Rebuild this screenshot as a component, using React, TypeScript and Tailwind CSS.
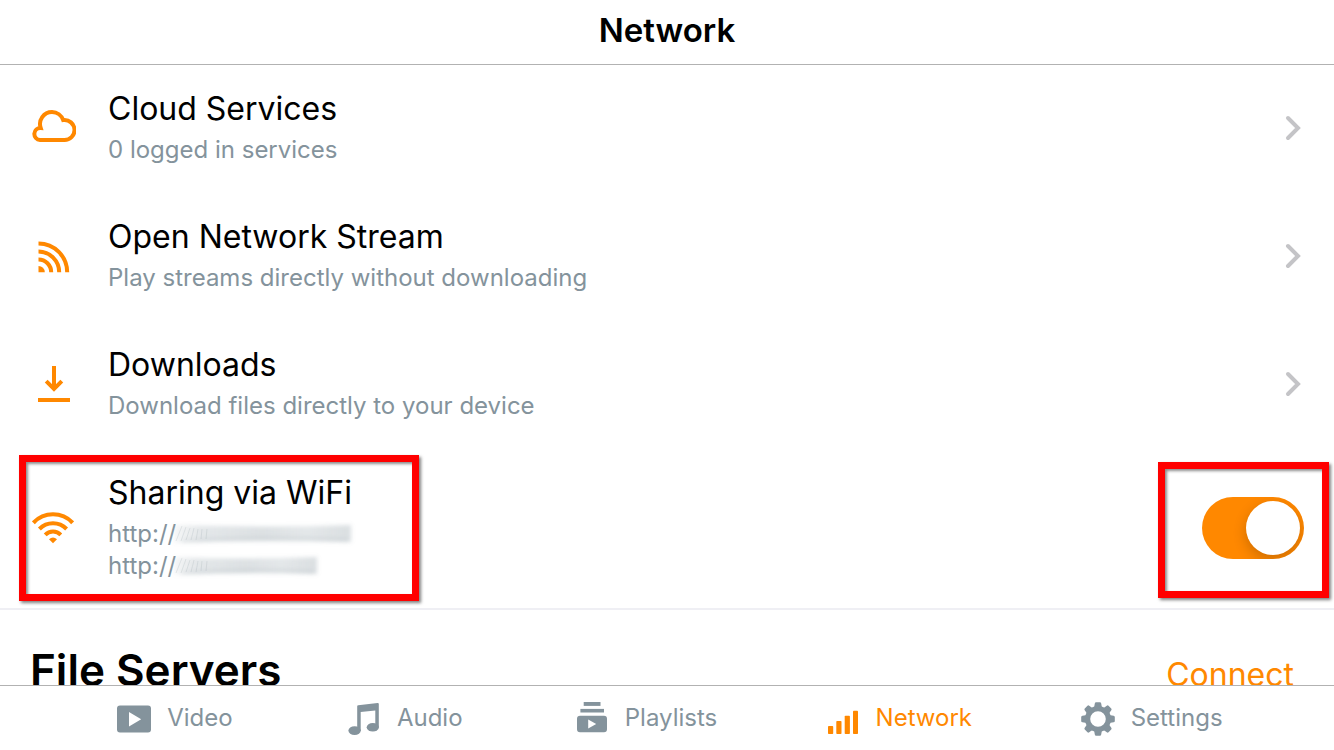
import { useState, type ReactNode } from "react";

function CloudIcon() {
  return (
    <svg width="44" height="34" viewBox="0 0 44 34" fill="none" stroke="currentColor" strokeWidth="4" aria-hidden="true">
      <path d="M8 30H32A10 10 0 1 0 31.2 10.1A12 12 0 0 0 20 2A12 12 0 0 0 8.7 18A6 6 0 0 0 8 30Z" />
    </svg>
  );
}

function StreamIcon() {
  return (
    <svg width="32" height="36" viewBox="0 -4 32 36" fill="none" stroke="currentColor" strokeWidth="4" aria-hidden="true">
      <path d="M.5 2.5A28.7 28.7 0 0 1 29.2 31.2M.5 10.5A20.7 20.7 0 0 1 21.2 31.2M.5 18.5A12.7 12.7 0 0 1 13.2 31.2" />
      <path d="M.5 24.9A6.3 6.3 0 0 1 6.8 31.2H.5Z" fill="currentColor" stroke="none" />
    </svg>
  );
}

function DownloadIcon() {
  return (
    <svg width="32" height="38" viewBox="0 -2 32 38" fill="none" stroke="currentColor" strokeWidth="4" aria-hidden="true">
      <path d="M16 0V23M8.2 15.2L16 23L23.8 15.2M0 34H32" />
    </svg>
  );
}

function WifiIcon() {
  return (
    <svg className="mr-0.5" width="42" height="34" viewBox="0 -2 42 34" fill="none" stroke="currentColor" strokeWidth="4" aria-hidden="true">
      <path d="M1.4 10.8A27 27 0 0 1 40.6 10.8M7.4 17A19 19 0 0 1 34.6 17M13.2 22.8A11 11 0 0 1 28.8 22.8" />
      <path d="M17 27.2Q21 24 25 27.2L21 31.2Z" fill="currentColor" stroke="none" />
    </svg>
  );
}

function VideoIcon() {
  return (
    <svg width="34" height="34" viewBox="0 0 34 34" fill="currentColor" aria-hidden="true">
      <path fillRule="evenodd" d="M3 4.6H31A3 3 0 0 1 34 7.6V28.6A3 3 0 0 1 31 31.6H3A3 3 0 0 1 0 28.6V7.6A3 3 0 0 1 3 4.6ZM12 11V25.4L24.2 18.2Z" />
    </svg>
  );
}

function AudioIcon() {
  return (
    <svg width="32" height="34" viewBox="0 0 32 34" fill="currentColor" aria-hidden="true">
      <path d="M9.2 5.2Q9.2 4.3 10.2 4.2L29.6 2Q30.8 1.9 30.8 3V26H27.3V9.4L12.7 11V30H9.2Z" />
      <ellipse cx="6.6" cy="29.6" rx="6.2" ry="4.4" />
      <ellipse cx="24.8" cy="26.2" rx="6.1" ry="4.3" />
    </svg>
  );
}

function PlaylistsIcon() {
  return (
    <svg width="30" height="34" viewBox="0 0 30 34" fill="currentColor" aria-hidden="true">
      <rect x="6.7" y="1" width="16.8" height="3.9" />
      <rect x="3.4" y="7.9" width="23.6" height="3.6" />
      <path fillRule="evenodd" d="M3 14.8H27A3 3 0 0 1 30 17.8V28.2A3 3 0 0 1 27 31.2H3A3 3 0 0 1 0 28.2V17.8A3 3 0 0 1 3 14.8ZM11.2 18.6V27.6L19.2 23Z" />
    </svg>
  );
}

function NetworkIcon() {
  return (
    <svg width="30" height="34" viewBox="0 0 30 34" fill="currentColor" aria-hidden="true">
      <rect x="0" y="25" width="5.2" height="8" rx="0.8" />
      <rect x="8.3" y="20" width="5.2" height="13" rx="0.8" />
      <rect x="16.7" y="14.8" width="5.2" height="18.2" rx="0.8" />
      <rect x="25" y="9.8" width="5" height="23.2" rx="0.8" />
    </svg>
  );
}

function SettingsIcon() {
  return (
    <svg width="34" height="34" viewBox="-17 -18 34 34" fill="currentColor" overflow="visible" aria-hidden="true">
      <circle r="10.4" fill="none" stroke="currentColor" strokeWidth="5.2" />
      {[0, 45, 90, 135, 180, 225, 270, 315].map((angle) => (
        <path key={angle} transform={`rotate(${angle})`} d="M-4 -11L-3.2 -15.6Q-3 -16.8 -1.9 -16.8H1.9Q3 -16.8 3.2 -15.6L4 -11Z" />
      ))}
    </svg>
  );
}

function Chevron() {
  return (
    <svg className="mr-[3px] text-[#c4c4c7]" width="16" height="28" viewBox="0 -2 16 28" fill="none" stroke="currentColor" strokeWidth="4" strokeLinecap="round" aria-hidden="true">
      <path d="M3 3L13 13L3 23" />
    </svg>
  );
}

function HiddenAddress({ width }: { width: number }) {
  return (
    <svg className="-ml-2" width={width} height="30" viewBox={`0 0 ${width} 30`} fill="none" aria-hidden="true">
      <defs>
        <linearGradient id={`fade-${width}`}>
          <stop offset="0" stopColor="#84939c" stopOpacity="0.08" />
          <stop offset="0.15" stopColor="#84939c" stopOpacity="0.22" />
          <stop offset="0.5" stopColor="#84939c" stopOpacity="0.28" />
          <stop offset="0.75" stopColor="#84939c" stopOpacity="0.22" />
          <stop offset="1" stopColor="#84939c" stopOpacity="0.3" />
        </linearGradient>
        <filter id={`soft-${width}`} x="-5%" y="-30%" width="110%" height="160%">
          <feGaussianBlur stdDeviation="2" />
        </filter>
      </defs>
      <g filter={`url(#soft-${width})`}>
        <path d={`M6 6Q${width / 2} 9 ${width - 5} 6V23Q${width / 2} 21 6 24Z`} fill={`url(#fade-${width})`} />
        <path d={`M14 22Q${width / 2} 17 ${width - 8} 21`} stroke="#84939c" strokeOpacity="0.25" strokeWidth="2" />
      </g>
      <path d="M8 22L14 7M13 22L18 8M18 21L22 9M23 21L26 9M28 21L30 10M33 20L34 10M38 20L39 10" stroke="#84939c" strokeOpacity="0.18" />
    </svg>
  );
}

type RowProps = { icon: ReactNode; title: string; children: ReactNode };

function RowBody({ icon, title, children }: RowProps) {
  return (
    <>
      <span className="flex w-11 shrink-0 justify-center text-[#ff8800]">{icon}</span>
      <span className="flex min-w-0 flex-1 flex-col gap-1">
        <span className="text-[32px] leading-[42px]">{title}</span>
        <span className="text-2xl leading-8 text-[#84939c]">{children}</span>
      </span>
    </>
  );
}

function LinkRow(props: RowProps) {
  return (
    <li>
      <a href="#" className="flex items-center gap-8 pt-[23px] pr-[30px] pb-[27px] pl-8">
        <RowBody {...props} />
        <Chevron />
      </a>
    </li>
  );
}

const tabs = [
  { name: "Video", icon: <VideoIcon /> },
  { name: "Audio", icon: <AudioIcon /> },
  { name: "Playlists", icon: <PlaylistsIcon /> },
  { name: "Network", icon: <NetworkIcon /> },
  { name: "Settings", icon: <SettingsIcon /> },
];

export default function App() {
  const [sharing, setSharing] = useState(true);
  const frame =
    "pointer-events-none absolute border-[7px] border-[#ff0000] shadow-[2px_2px_3px_rgba(0,0,0,0.5),inset_2px_2px_3px_rgba(0,0,0,0.45)]";

  return (
    <div className="flex h-screen flex-col bg-white font-['Inter',sans-serif] text-black">
      <header className="border-b border-[#b2b2b2] pt-2.5 pb-3.5 text-center">
        <h1 className="text-[33px] leading-10 font-semibold">Network</h1>
      </header>

      <main className="min-h-0 flex-1 overflow-hidden">
        <ul>
          <LinkRow icon={<CloudIcon />} title="Cloud Services">0 logged in services</LinkRow>
          <LinkRow icon={<StreamIcon />} title="Open Network Stream">Play streams directly without downloading</LinkRow>
          <LinkRow icon={<DownloadIcon />} title="Downloads">Download files directly to your device</LinkRow>
          <li className="relative border-b-2 border-[#efeff4]">
            <label className="flex items-center gap-8 pt-[23px] pr-[30px] pb-[26px] pl-8">
              <RowBody icon={<WifiIcon />} title="Sharing via WiFi">
                <span className="flex h-8 items-center">http://<HiddenAddress width={188} /></span>
                <span className="flex h-8 items-center">http://<HiddenAddress width={154} /></span>
              </RowBody>
              <input
                type="checkbox"
                role="switch"
                checked={sharing}
                onChange={(event) => setSharing(event.target.checked)}
                className="mt-0.5 flex h-[62px] w-[102px] shrink-0 appearance-none items-center overflow-hidden rounded-full bg-[#e5e5ea] p-1 before:size-[54px] before:rounded-full before:bg-white before:shadow-[0_5px_14px_rgba(0,0,0,0.2)] checked:justify-end checked:bg-[#ff8800]"
              />
            </label>
            <span className={`${frame} top-1.5 left-[19px] h-[146px] w-[400px]`} />
            <span className={`${frame} top-[13px] right-[5px] h-[136px] w-[171px]`} />
          </li>
        </ul>
        <section className="flex items-start justify-between pt-7 pr-10 pl-[30px]">
          <h2 className="text-[44px] leading-[64px] font-semibold">File Servers</h2>
          <button type="button" className="pt-4 text-[32px] leading-[42px] text-[#ff8800]">Connect</button>
        </section>
      </main>

      <nav className="grid h-[65px] shrink-0 grid-cols-[230fr_230fr_253fr_253fr_253fr] items-center border-t border-[#b2b2b2] pr-14 pl-[60px] text-2xl">
        {tabs.map((tab) => (
          <a
            key={tab.name}
            href="#"
            aria-current={tab.name === "Network" ? "page" : undefined}
            className={`flex items-center justify-center gap-4 ${tab.name === "Network" ? "text-[#ff8800]" : "text-[#84939c]"}`}
          >
            <span className="flex w-[34px] shrink-0 justify-center">{tab.icon}</span>
            {tab.name}
          </a>
        ))}
      </nav>
    </div>
  );
}
